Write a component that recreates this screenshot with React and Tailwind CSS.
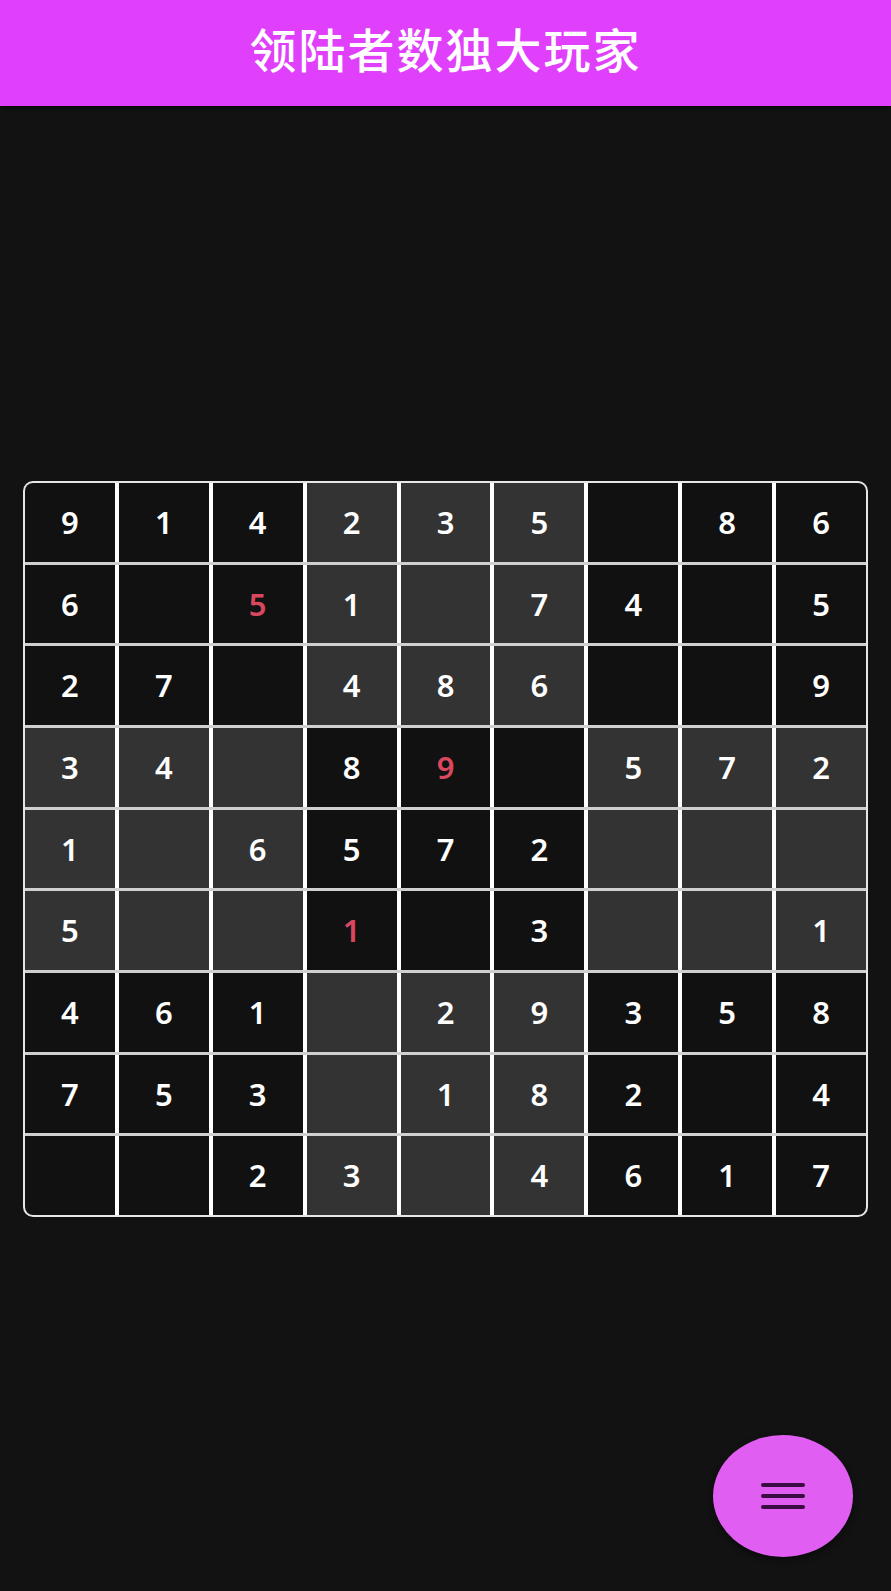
import React from "react";

// 0 = empty, negative = conflicting entry (shown in red)
const BOARD = [
  [9, 1, 4, 2, 3, 5, 0, 8, 6],
  [6, 0, -5, 1, 0, 7, 4, 0, 5],
  [2, 7, 0, 4, 8, 6, 0, 0, 9],
  [3, 4, 0, 8, -9, 0, 5, 7, 2],
  [1, 0, 6, 5, 7, 2, 0, 0, 0],
  [5, 0, 0, -1, 0, 3, 0, 0, 1],
  [4, 6, 1, 0, 2, 9, 3, 5, 8],
  [7, 5, 3, 0, 1, 8, 2, 0, 4],
  [0, 0, 2, 3, 0, 4, 6, 1, 7],
];

function isShaded(r, c) {
  const br = Math.floor(r / 3);
  const bc = Math.floor(c / 3);
  return (br + bc) % 2 === 1;
}

function Cell({ value, shaded }) {
  const bad = value < 0;
  const n = Math.abs(value);
  return (
    <div
      className={`flex flex-1 items-center justify-center ${shaded ? "bg-[#333333]" : "bg-[#111111]"}`}
    >
      {n ? (
        <span
          className={`font-['Noto_Sans',sans-serif] text-[31px] font-semibold leading-none ${
            bad ? "text-[#d9485e]" : "text-white"
          }`}
        >
          {n}
        </span>
      ) : null}
    </div>
  );
}

export default function App() {
  return (
    <div className="relative min-h-screen bg-[#121212]">
      <header className="flex h-[106px] items-center justify-center bg-[#e040fb] shadow-[0_2px_4px_rgba(0,0,0,0.6)]">
        <h1 className="pb-[12px] font-['Noto_Sans_CJK_SC','Noto_Sans',sans-serif] text-[47px] font-medium leading-none tracking-[2px] text-white">
          领陆者数独大玩家
        </h1>
      </header>

      <main className="px-[23px] pt-[375px]">
        <div className="flex h-[736px] flex-col overflow-hidden rounded-[10px] border-2 border-[#e6e6e6] bg-[#cfcfcf]">
          {BOARD.map((row, r) => (
            <div
              key={r}
              className={`flex flex-1 gap-[4px] bg-white ${r > 0 ? "border-t-[3px] border-[#d0d0d0]" : ""}`}
            >
              {row.map((v, c) => (
                <Cell key={c} value={v} shaded={isShaded(r, c)} />
              ))}
            </div>
          ))}
        </div>
      </main>

      <button
        type="button"
        className="absolute bottom-[34px] right-[38px] flex h-[122px] w-[140px] items-center justify-center rounded-[50%] bg-[#e15ef3] shadow-[0_3px_6px_rgba(0,0,0,0.5)]"
      >
        <span className="flex w-[44px] flex-col gap-[7px]">
          <span className="h-[4px] rounded-full bg-[#3a0d42]" />
          <span className="h-[4px] rounded-full bg-[#3a0d42]" />
          <span className="h-[4px] rounded-full bg-[#3a0d42]" />
        </span>
      </button>
    </div>
  );
}
